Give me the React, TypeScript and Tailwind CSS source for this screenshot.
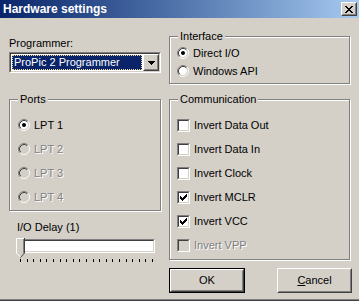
import React from "react";

// classic 3D edge helpers
const sunkenOuter = "border border-t-[#808080] border-l-[#808080] border-b-white border-r-white";
const sunkenInner = "border border-t-[#404040] border-l-[#404040] border-b-[#d4d0c8] border-r-[#d4d0c8]";
const raisedOuter = "border border-t-white border-l-white border-b-[#404040] border-r-[#404040]";
const raisedInner = "border border-t-[#d4d0c8] border-l-[#d4d0c8] border-b-[#808080] border-r-[#808080]";

const Radio = ({ checked = false, disabled = false }: { checked?: boolean; disabled?: boolean }) => (
  <svg width="12" height="12" viewBox="0 0 12 12" className="shrink-0">
    <circle cx="6" cy="6" r="4.2" fill={disabled ? "#d4d0c8" : "#ffffff"} />
    <path d="M2.11 9.89 A5.5 5.5 0 0 1 9.89 2.11" stroke="#808080" fill="none" />
    <path d="M9.89 2.11 A5.5 5.5 0 0 1 2.11 9.89" stroke="#ffffff" fill="none" />
    <path d="M2.82 9.18 A4.5 4.5 0 0 1 9.18 2.82" stroke="#404040" fill="none" />
    <path d="M9.18 2.82 A4.5 4.5 0 0 1 2.82 9.18" stroke="#d4d0c8" fill="none" />
    {checked && <circle cx="6" cy="6" r="2" fill="#000000" />}
  </svg>
);

const Checkbox = ({ checked = false, disabled = false }: { checked?: boolean; disabled?: boolean }) => (
  <div className={`w-[13px] h-[13px] shrink-0 ${sunkenOuter}`}>
    <div className={`w-full h-full ${sunkenInner} ${disabled ? "bg-[#d4d0c8]" : "bg-white"}`}>
      {checked && (
        <svg width="7" height="7" viewBox="0 0 7 7" shapeRendering="crispEdges" className="ml-[1px] mt-[1px]">
          <path d="M0 2h1v3h-1z M1 3h1v3h-1z M2 4h1v3h-1z M3 3h1v3h-1z M4 2h1v3h-1z M5 1h1v3h-1z M6 0h1v3h-1z" fill="#000" />
        </svg>
      )}
    </div>
  </div>
);

const Label = ({ children, disabled }: { children: React.ReactNode; disabled?: boolean }) => (
  <span className={disabled ? "text-[#808080] [text-shadow:1px_1px_0_#ffffff]" : ""}>{children}</span>
);

const GroupBox = ({ title, className, children }: { title: string; className: string; children: React.ReactNode }) => (
  <div className={`relative border border-[#808080] shadow-[inset_1px_1px_0_#ffffff,1px_1px_0_#ffffff] ${className}`}>
    <span className="absolute -top-[7px] left-[8px] px-[2px] bg-[#d4d0c8] leading-[13px]">{title}</span>
    {children}
  </div>
);

export default function App() {
  const ports = ["LPT 1", "LPT 2", "LPT 3", "LPT 4"];
  const comm = [
    { label: "Invert Data Out", checked: false },
    { label: "Invert Data In", checked: false },
    { label: "Invert Clock", checked: false },
    { label: "Invert MCLR", checked: true },
    { label: "Invert VCC", checked: true },
    { label: "Invert VPP", checked: false, disabled: true },
  ];

  return (
    <div className="w-[359px] h-[301px] bg-[#d4d0c8] text-black text-[11px] leading-[13px] font-['Liberation_Sans',Arial,sans-serif] flex flex-col overflow-hidden border-b border-b-[#404040] shadow-[inset_0_-1px_0_#808080]">
      {/* title bar */}
      <div className="h-[18px] shrink-0 flex items-center justify-between pl-[3px] pr-[2px] bg-linear-to-r from-[#0a246a] to-[#a6caf0]">
        <span className="text-white font-bold text-[12px]">Hardware settings</span>
        <div className={`w-[16px] h-[14px] bg-[#d4d0c8] ${raisedOuter}`}>
          <div className={`w-full h-full flex items-center justify-center ${raisedInner}`}>
            <svg width="8" height="7" viewBox="0 0 8 7" shapeRendering="crispEdges">
              <path d="M0 0h2v1h-2z M6 0h2v1h-2z M1 1h2v1h-2z M5 1h2v1h-2z M2 2h4v1h-4z M3 3h2v1h-2z M2 4h4v1h-4z M1 5h2v1h-2z M5 5h2v1h-2z M0 6h2v1h-2z M6 6h2v1h-2z" fill="#000" />
            </svg>
          </div>
        </div>
      </div>

      <div className="flex-1 flex px-[9px] gap-[8px]">
        {/* left column */}
        <div className="w-[152px] flex flex-col">
          <div className="mt-[19px]">Programmer:</div>
          <div className={`mt-[2px] h-[21px] w-[152px] ${sunkenOuter}`}>
            <div className={`w-full h-full bg-white flex ${sunkenInner}`}>
              <div className="flex-1 m-[1px] bg-[#0a246a] border border-dotted border-[#f5db95] text-white pl-[1px] flex items-center">
                ProPic 2 Programmer
              </div>
              <div className={`w-[16px] h-full bg-[#d4d0c8] ${raisedOuter}`}>
                <div className={`w-full h-full flex items-center justify-center ${raisedInner}`}>
                  <svg width="7" height="4" viewBox="0 0 7 4" shapeRendering="crispEdges">
                    <path d="M0 0h7v1h-7z M1 1h5v1h-5z M2 2h3v1h-3z M3 3h1v1h-1z" fill="#000" />
                  </svg>
                </div>
              </div>
            </div>
          </div>

          <GroupBox title="Ports" className="mt-[26px] h-[112px] pt-[13px] pl-[8px]">
            {ports.map((p, i) => (
              <div key={p} className="h-[24px] flex items-center gap-[4px]">
                <Radio checked={i === 0} disabled={i > 0} />
                <Label disabled={i > 0}>{p}</Label>
              </div>
            ))}
          </GroupBox>

          <div className="mt-[10px] ml-[8px]">I/O Delay (1)</div>
          <div className="mt-[4px] ml-[7px] relative w-[139px]">
            <div className={`ml-[1px] mt-[1px] h-[14px] w-[138px] ${sunkenOuter}`}>
              <div className={`w-full h-full bg-white ${sunkenInner}`} />
            </div>
            <svg width="9" height="21" viewBox="0 0 9 21" className="absolute left-0 top-0" shapeRendering="crispEdges">
              <path d="M0 0H9V15L4.5 20L0 15Z" fill="#d4d0c8" />
              <path d="M0.5 15V0.5H8" stroke="#ffffff" fill="none" />
              <path d="M8.5 0V15L4.5 19.5" stroke="#404040" fill="none" shapeRendering="auto" />
              <path d="M7.5 1V14.5" stroke="#808080" fill="none" />
              <path d="M0.5 15L4.5 19" stroke="#ffffff" fill="none" shapeRendering="auto" />
            </svg>
            <div className="mt-[6px] ml-[4px] w-[133px] flex justify-between">
              {Array.from({ length: 21 }).map((_, i) => (
                <div key={i} className="w-[1px] h-[3px] bg-black" />
              ))}
            </div>
          </div>
        </div>

        {/* right column */}
        <div className="w-[184px] flex flex-col">
          <GroupBox title="Interface" className="mt-[18px] h-[48px] pt-[7px] pl-[7px]">
            <div className="h-[18px] flex items-center gap-[4px]">
              <Radio checked />
              <span>Direct I/O</span>
            </div>
            <div className="h-[18px] flex items-center gap-[4px]">
              <Radio />
              <span>Windows API</span>
            </div>
          </GroupBox>

          <GroupBox title="Communication" className="mt-[15px] h-[161px] pt-[13px] pl-[7px]">
            {comm.map((c) => (
              <div key={c.label} className="h-[24px] flex items-center gap-[4px]">
                <Checkbox checked={c.checked} disabled={c.disabled} />
                <Label disabled={c.disabled}>{c.label}</Label>
              </div>
            ))}
          </GroupBox>

          <div className="mt-[8px] -mr-[2px] flex justify-between">
            <div className="w-[76px] h-[25px] border border-black">
              <div className={`w-full h-full ${raisedOuter}`}>
                <div className={`w-full h-full flex items-center justify-center ${raisedInner}`}>OK</div>
              </div>
            </div>
            <div className={`w-[75px] h-[25px] ${raisedOuter}`}>
              <div className={`w-full h-full flex items-center justify-center ${raisedInner}`}>
                <span>
                  <span className="underline underline-offset-[1px]">C</span>ancel
                </span>
              </div>
            </div>
          </div>
        </div>
      </div>
    </div>
  );
}
